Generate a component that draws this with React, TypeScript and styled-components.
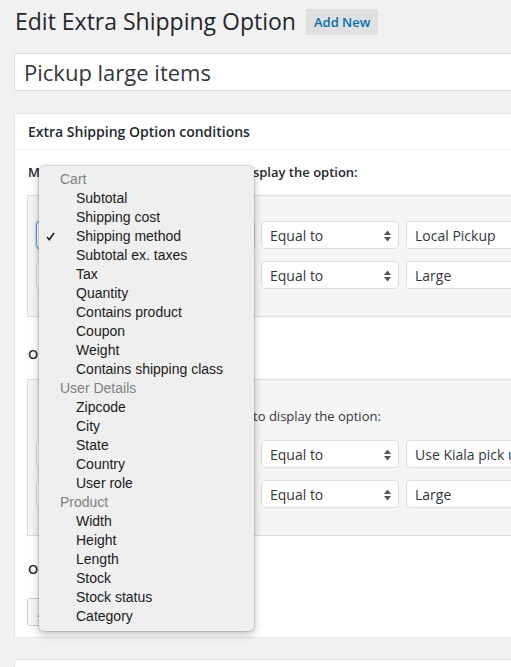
import styled, { createGlobalStyle } from "styled-components";

const GlobalStyle = createGlobalStyle`
  html, body {
    margin: 0;
    padding: 0;
    background: #f1f1f1;
    overflow: hidden;
  }
  body {
    font-family: "Open Sans", "Liberation Sans", sans-serif;
    color: #23282d;
  }
`;

const Page = styled.div`
  position: relative;
  width: 640px;
  padding: 7px 0 0 14px;
`;

const TitleRow = styled.div`
  display: flex;
  align-items: center;
  gap: 10px;
  padding-left: 1px;
`;

const Heading = styled.h1`
  margin: 0;
  font-size: 23px;
  font-weight: 400;
  line-height: 29px;
  color: #23282d;
`;

const AddNew = styled.a`
  display: flex;
  align-items: center;
  height: 26px;
  padding: 0 8px;
  background: #e0e0e0;
  border-radius: 2px;
  font-size: 13px;
  font-weight: 600;
  color: #0073aa;
  text-decoration: none;
`;

const TitleInput = styled.div`
  margin-top: 17px;
  height: 36px;
  display: flex;
  align-items: center;
  padding: 0 9px;
  background: #fff;
  border: 1px solid #ddd;
  border-right: none;
  font-size: 22px;
  color: #32373c;
`;

const Postbox = styled.div<{ $gap: number }>`
  margin-top: ${(p) => p.$gap}px;
  background: #fff;
  border: 1px solid #e5e5e5;
  border-right: none;
`;

const BoxHeader = styled.div`
  height: 35px;
  display: flex;
  align-items: center;
  padding-left: 13px;
  border-bottom: 1px solid #eee;
  font-size: 14px;
  font-weight: 600;
  color: #23282d;
`;

const Inside = styled.div`
  padding: 12px 0 11px 12px;
`;

const Line = styled.p<{ $bold?: boolean; $top?: number; $bottom?: number }>`
  margin: ${(p) => p.$top ?? 0}px 0 ${(p) => p.$bottom ?? 0}px 0;
  padding-left: 1px;
  font-size: 13px;
  line-height: 20px;
  font-weight: ${(p) => (p.$bold ? 600 : 400)};
  color: #23282d;
`;

const Group = styled.div`
  background: #f5f5f5;
  border: 1px solid #dcdcdc;
  border-right: none;
  padding: 25px 0 27px 8px;
  display: flex;
  flex-direction: column;
  gap: 12px;
`;

const GroupText = styled.p`
  margin: 1px 0 2px 9px;
  font-size: 13px;
  line-height: 20px;
  color: #32373c;
`;

const Row = styled.div`
  display: flex;
  gap: 7px;
`;

const Select = styled.div<{ $w: number; $focus?: boolean }>`
  position: relative;
  box-sizing: border-box;
  width: ${(p) => p.$w}px;
  height: 28px;
  display: flex;
  align-items: center;
  padding: 0 8px;
  background: #fff;
  border: 1px solid ${(p) => (p.$focus ? "#5b9dd9" : "#ddd")};
  box-shadow: ${(p) => (p.$focus ? "0 0 2px rgba(30,140,190,.8)" : "none")};
  border-radius: 4px;
  font-size: 14px;
  color: #32373c;
  white-space: nowrap;
  overflow: hidden;
`;

const Arrows = styled.svg`
  position: absolute;
  right: 7px;
  top: 8px;
`;

const Button = styled.div`
  margin-top: 19px;
  display: inline-flex;
  align-items: center;
  height: 26px;
  padding: 0 10px;
  background: #f7f7f7;
  border: 1px solid #ccc;
  border-radius: 3px;
  font-size: 13px;
  color: #555;
`;

const NextBox = styled.div`
  margin-top: 21px;
  height: 40px;
  background: #fff;
  border: 1px solid #e5e5e5;
  border-right: none;
`;

const Menu = styled.ul`
  position: absolute;
  left: 39px;
  top: 166px;
  width: 215px;
  margin: 0;
  padding: 4px 0 5px 0;
  list-style: none;
  box-sizing: border-box;
  background: #efefef;
  border-radius: 5px;
  box-shadow: 0 0 0 1px rgba(0, 0, 0, 0.1), 0 3px 9px rgba(0, 0, 0, 0.28);
  font-family: "Liberation Sans", Arial, sans-serif;
  font-size: 14px;
`;

const MenuItem = styled.li<{ $header?: boolean }>`
  position: relative;
  height: 19px;
  line-height: 19px;
  padding-left: ${(p) => (p.$header ? 21 : 37)}px;
  color: ${(p) => (p.$header ? "#7f7f7f" : "#1b1b1b")};
  white-space: nowrap;
`;

const Check = styled.svg`
  position: absolute;
  left: 7px;
  top: 5px;
`;

const SelectArrows = () => (
  <Arrows width="7" height="12" viewBox="0 0 7 12">
    <path d="M3.5 0.5 L7 5 L0 5 Z M0 7 L7 7 L3.5 11.5 Z" fill="#555" />
  </Arrows>
);

const menu: { label: string; header?: boolean; checked?: boolean }[] = [
  { label: "Cart", header: true },
  { label: "Subtotal" },
  { label: "Shipping cost" },
  { label: "Shipping method", checked: true },
  { label: "Subtotal ex. taxes" },
  { label: "Tax" },
  { label: "Quantity" },
  { label: "Contains product" },
  { label: "Coupon" },
  { label: "Weight" },
  { label: "Contains shipping class" },
  { label: "User Details", header: true },
  { label: "Zipcode" },
  { label: "City" },
  { label: "State" },
  { label: "Country" },
  { label: "User role" },
  { label: "Product", header: true },
  { label: "Width" },
  { label: "Height" },
  { label: "Length" },
  { label: "Stock" },
  { label: "Stock status" },
  { label: "Category" },
];

const ConditionRow = ({
  condition,
  value,
  focus,
}: {
  condition: string;
  value: string;
  focus?: boolean;
}) => (
  <Row>
    <Select $w={218} $focus={focus}>
      {condition}
      <SelectArrows />
    </Select>
    <Select $w={138}>
      Equal to
      <SelectArrows />
    </Select>
    <Select $w={200}>{value}</Select>
  </Row>
);

const App = () => {
  return (
    <>
      <GlobalStyle />
      <Page>
        <TitleRow>
          <Heading>Edit Extra Shipping Option</Heading>
          <AddNew href="#">Add New</AddNew>
        </TitleRow>
        <TitleInput>Pickup large items</TitleInput>

        <Postbox $gap={22}>
          <BoxHeader>Extra Shipping Option conditions</BoxHeader>
          <Inside>
            <Line $bold $bottom={13}>
              Match all of the following rules to display the option:
            </Line>
            <Group>
              <ConditionRow condition="Shipping method" value="Local Pickup" focus />
              <ConditionRow condition="Shipping class" value="Large" />
            </Group>

            <Line $bold $top={27} $bottom={15}>
              Or
            </Line>
            <Group>
              <GroupText>Or match all of the following rules to display the option:</GroupText>
              <ConditionRow condition="Shipping method" value="Use Kiala pick up point" />
              <ConditionRow condition="Shipping class" value="Large" />
            </Group>

            <Line $bold $top={23}>
              Or
            </Line>
            <Button>Add 'Or' group</Button>
          </Inside>
        </Postbox>
        <NextBox />

        <Menu>
          {menu.map((m) => (
            <MenuItem key={m.label} $header={m.header}>
              {m.checked && (
                <Check width="9" height="9" viewBox="0 0 9 9">
                  <path d="M1 5 L3.3 7.6 L8 1" fill="none" stroke="#1b1b1b" strokeWidth="1.6" />
                </Check>
              )}
              {m.label}
            </MenuItem>
          ))}
        </Menu>
      </Page>
    </>
  );
};

export default App;
